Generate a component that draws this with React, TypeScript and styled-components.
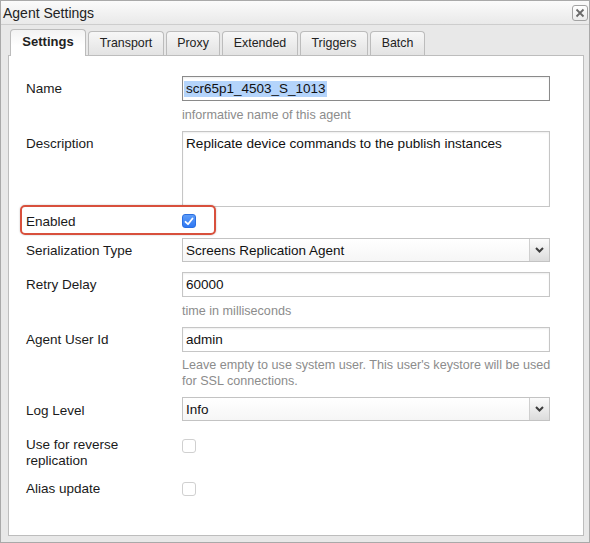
import React from "react";
import styled, { createGlobalStyle, css } from "styled-components";

const Global = createGlobalStyle`
  html, body { margin: 0; padding: 0; background: #ffffff; overflow: hidden; }
  * { box-sizing: border-box; }
`;

const Window = styled.div`
  width: 590px;
  height: 543px;
  border: 1px solid #a9a9a9;
  background: #e8e8e8;
  display: flex;
  flex-direction: column;
  font-family: "Liberation Sans", Arial, sans-serif;
  color: #1a1a1a;
`;

const TitleBar = styled.div`
  height: 24px;
  flex: none;
  border-bottom: 1px solid #cdcdcd;
  background: linear-gradient(#fbfbfb, #e9e9e9);
  display: flex;
  align-items: center;
  justify-content: space-between;
  padding: 0 1px 0 2px;
`;

const Title = styled.div`
  font-size: 14px;
  color: #222;
  line-height: 16px;
`;

const CloseButton = styled.div`
  width: 16px;
  height: 16px;
  border: 1px solid #a3a3a3;
  border-radius: 3px;
  background: linear-gradient(#ffffff, #ececec);
  display: flex;
  align-items: center;
  justify-content: center;
  margin-top: 1px;
`;

const Body = styled.div`
  flex: 1;
  display: flex;
  flex-direction: column;
  padding: 4px 5px 6px 7px;
`;

const TabStrip = styled.div`
  display: flex;
  align-items: flex-end;
  padding-left: 2px;
  height: 26px;
  position: relative;
  z-index: 1;
`;

const Tab = styled.div<{ $w: number; $active?: boolean }>`
  width: ${(p) => p.$w}px;
  margin-right: 2px;
  height: 24px;
  border: 1px solid #bcbcbc;
  border-bottom: none;
  border-radius: 4px 4px 0 0;
  background: linear-gradient(#f7f7f7, #e3e3e3);
  font-size: 12.4px;
  color: #222;
  display: flex;
  align-items: center;
  justify-content: center;
  padding-bottom: 2px;
  ${(p) =>
    p.$active &&
    css`
      height: 27px;
      margin-bottom: -1px;
      font-weight: bold;
      font-size: 13px;
      background: linear-gradient(#f3f3f3, #ffffff 60%);
      padding-bottom: 3px;
    `}
`;

const Panel = styled.div`
  flex: 1;
  border: 1px solid #bdbdbd;
  background: #ffffff;
  padding: 20px 0 0 17px;
  display: flex;
  flex-direction: column;
`;

const Row = styled.div<{ $mb?: number }>`
  display: grid;
  grid-template-columns: 156px 368px;
  align-items: start;
  margin-bottom: ${(p) => (p.$mb ?? 10)}px;
  position: relative;
`;

const Label = styled.div<{ $lh?: number; $h?: number }>`
  font-size: 13.5px;
  line-height: ${(p) => p.$lh ?? 25}px;
  ${(p) => (p.$h !== undefined ? `height: ${p.$h}px;` : "")}
  color: #1a1a1a;
`;

const Field = styled.div`
  display: flex;
  flex-direction: column;
`;

const TextBox = styled.div<{ $focus?: boolean }>`
  height: 25px;
  border: 1px solid ${(p) => (p.$focus ? "#8a8a8a" : "#c6c6c6")};
  box-shadow: inset 0 1px 2px rgba(0, 0, 0, 0.07);
  background: #fff;
  font-size: 13.5px;
  line-height: 24px;
  padding: 0 3px;
  color: #111;
  white-space: nowrap;
  overflow: hidden;
`;

const TextArea = styled.div`
  height: 76px;
  border: 1px solid #c6c6c6;
  box-shadow: inset 0 1px 2px rgba(0, 0, 0, 0.07);
  background: #fff;
  font-size: 13.6px;
  line-height: 16px;
  padding: 4px 3px;
  color: #111;
`;

const Selected = styled.span`
  background: #b4d4fb;
  margin-left: -2px;
  padding: 0 1px 0 2px;
  display: inline-block;
  line-height: 16px;
`;

const Select = styled.div`
  height: 24px;
  border: 1px solid #c3c3c3;
  background: linear-gradient(#ffffff, #f6f6f6);
  display: flex;
  align-items: stretch;
  font-size: 13.5px;
  color: #111;
`;

const SelectValue = styled.div`
  flex: 1;
  padding: 0 3px;
  line-height: 23px;
`;

const SelectArrow = styled.div`
  width: 20px;
  border-left: 1px solid #cfcfcf;
  background: linear-gradient(#fbfbfb, #dcdcdc);
  display: flex;
  align-items: center;
  justify-content: center;
`;

const Hint = styled.div<{ $mt?: number }>`
  font-size: 12.6px;
  line-height: 16px;
  color: #8c8c8c;
  white-space: nowrap;
  margin-top: ${(p) => p.$mt ?? 6}px;
`;

const CheckCell = styled.div<{ $top?: number; $h?: number }>`
  display: flex;
  align-items: ${(p) => (p.$top !== undefined ? "flex-start" : "center")};
  padding-top: ${(p) => p.$top ?? 0}px;
  ${(p) => (p.$h !== undefined ? `height: ${p.$h}px;` : "")}
`;

const Check = styled.div<{ $checked?: boolean }>`
  width: 14px;
  height: 14px;
  border-radius: 3px;
  display: flex;
  align-items: center;
  justify-content: center;
  ${(p) =>
    p.$checked
      ? css`
          background: linear-gradient(#5d9cf8, #2f78f3);
          border: 1px solid #2b6fe0;
        `
      : css`
          background: #fff;
          border: 1px solid #d0d0d0;
        `}
`;

const Highlight = styled.div`
  position: absolute;
  left: -6px;
  top: -3px;
  width: 196px;
  height: 30px;
  border: 2px solid #d8503c;
  border-radius: 5px;
  box-shadow: 0 0 2px rgba(0, 0, 0, 0.25);
  pointer-events: none;
`;

const Chevron = () => (
  <svg width="9" height="6" viewBox="0 0 9 6">
    <polyline points="1,1 4.5,4.5 8,1" fill="none" stroke="#3d3d3d" strokeWidth="2" />
  </svg>
);

const tabs = [
  { label: "Settings", w: 76, active: true },
  { label: "Transport", w: 76 },
  { label: "Proxy", w: 54 },
  { label: "Extended", w: 76 },
  { label: "Triggers", w: 68 },
  { label: "Batch", w: 55 },
];

export default function App() {
  return (
    <>
      <Global />
      <Window>
        <TitleBar>
          <Title>Agent Settings</Title>
          <CloseButton>
            <svg width="10" height="10" viewBox="0 0 10 10">
              <path d="M1.5 1.5 L8.5 8.5 M8.5 1.5 L1.5 8.5" stroke="#6a6a6a" strokeWidth="1.8" />
            </svg>
          </CloseButton>
        </TitleBar>
        <Body>
          <TabStrip>
            {tabs.map((t) => (
              <Tab key={t.label} $w={t.w} $active={t.active}>
                {t.label}
              </Tab>
            ))}
          </TabStrip>
          <Panel>
            <Row $mb={8}>
              <Label>Name</Label>
              <Field>
                <TextBox $focus>
                  <Selected>scr65p1_4503_S_1013</Selected>
                </TextBox>
                <Hint>informative name of this agent</Hint>
              </Field>
            </Row>
            <Row $mb={1}>
              <Label>Description</Label>
              <TextArea>Replicate device commands to the publish instances</TextArea>
            </Row>
            <Row $mb={4}>
              <Highlight />
              <Label $h={26} $lh={27}>Enabled</Label>
              <CheckCell $h={26}>
                <Check $checked>
                  <svg width="10" height="9" viewBox="0 0 10 9">
                    <polyline points="1.5,4.8 4,7.2 8.5,1.5" fill="none" stroke="#fff" strokeWidth="1.8" strokeLinecap="round" strokeLinejoin="round" />
                  </svg>
                </Check>
              </CheckCell>
            </Row>
            <Row>
              <Label $h={24} $lh={26}>Serialization Type</Label>
              <Select>
                <SelectValue>Screens Replication Agent</SelectValue>
                <SelectArrow>
                  <Chevron />
                </SelectArrow>
              </Select>
            </Row>
            <Row $mb={8}>
              <Label>Retry Delay</Label>
              <Field>
                <TextBox>60000</TextBox>
                <Hint>time in milliseconds</Hint>
              </Field>
            </Row>
            <Row $mb={8}>
              <Label>Agent User Id</Label>
              <Field>
                <TextBox>admin</TextBox>
                <Hint $mt={5}>
                  Leave empty to use system user. This user's keystore will be used
                  <br />
                  for SSL connections.
                </Hint>
              </Field>
            </Row>
            <Row $mb={16}>
              <Label $h={24} $lh={27}>Log Level</Label>
              <Select>
                <SelectValue>Info</SelectValue>
                <SelectArrow>
                  <Chevron />
                </SelectArrow>
              </Select>
            </Row>
            <Row $mb={12}>
              <Label $lh={16}>
                Use for reverse
                <br />
                replication
              </Label>
              <CheckCell $top={2}>
                <Check />
              </CheckCell>
            </Row>
            <Row>
              <Label $lh={16}>Alias update</Label>
              <CheckCell $top={1}>
                <Check />
              </CheckCell>
            </Row>
          </Panel>
        </Body>
      </Window>
    </>
  );
}
